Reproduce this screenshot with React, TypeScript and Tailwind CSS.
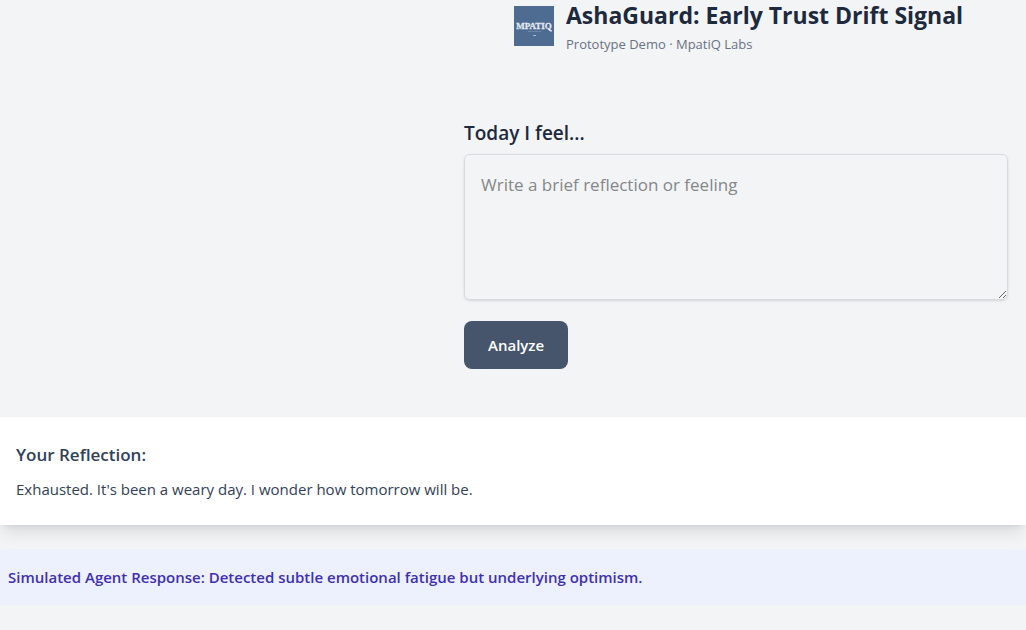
import { useState, type FormEvent } from "react";

function Logo() {
  return (
    <svg viewBox="0 0 40 40" className="h-10 w-10 shrink-0" role="img" aria-label="MpatiQ">
      <rect width="40" height="40" fill="#4e6b91" />
      <text
        x="20"
        y="23"
        textAnchor="middle"
        fontSize="9"
        fontWeight="700"
        fill="#e3e8ee"
        stroke="#e3e8ee"
        strokeWidth="0.3"
        fontFamily="'Liberation Serif', serif"
      >
        MPATIQ
      </text>
      <path d="M34 22.5l3.5 3" stroke="#e3e8ee" strokeWidth="1.2" />
      <path d="M14 25.5h13" stroke="#8c9fb8" strokeWidth="0.6" strokeDasharray="3 0.6" />
      <path d="M19 29.5h3" stroke="#a9b8ca" strokeWidth="1" />
    </svg>
  );
}

function Header() {
  return (
    <header className="flex items-center gap-3 pl-[50px]">
      <Logo />
      <div>
        <h1 className="text-[23px] leading-[30px] font-bold whitespace-nowrap text-slate-800">
          AshaGuard: Early Trust Drift Signal
        </h1>
        <p className="mt-1.5 text-[13px] leading-4 text-gray-500">Prototype Demo · MpatiQ Labs</p>
      </div>
    </header>
  );
}

function ReflectionForm({ onAnalyze }: { onAnalyze: (text: string) => void }) {
  const [text, setText] = useState("");

  const submit = (e: FormEvent) => {
    e.preventDefault();
    if (text.trim()) onAnalyze(text);
  };

  return (
    <form onSubmit={submit} className="mt-17 flex flex-col items-start">
      <label htmlFor="reflection" className="mb-2 text-[19px] leading-[26px] font-semibold text-slate-800">
        Today I feel...
      </label>
      <textarea
        id="reflection"
        value={text}
        onChange={(e) => setText(e.target.value)}
        placeholder="Write a brief reflection or feeling"
        className="h-[146px] w-full rounded-md border border-[#d8dadd] p-4 text-[17px] leading-7 text-slate-800 shadow-sm placeholder:text-[#858789]"
      />
      <button type="submit" className="mt-[21px] h-12 rounded-lg bg-[#46556b] px-6 text-[15px] font-semibold text-white">
        Analyze
      </button>
    </form>
  );
}

export default function App() {
  const [reflection, setReflection] = useState("Exhausted. It's been a weary day. I wonder how tomorrow will be.");

  return (
    <main className="min-h-screen overflow-x-hidden bg-[#f3f4f6] font-['Open_Sans','Noto_Sans',sans-serif]">
      <div className="mr-[18px] ml-auto w-[544px]">
        <Header />
        <ReflectionForm onAnalyze={setReflection} />
      </div>
      <section className="mt-12 bg-white px-4 py-6 shadow-lg">
        <h2 className="text-[17px] leading-7 font-semibold text-slate-700">Your Reflection:</h2>
        <p className="mt-2 text-[15px] leading-6 text-slate-700">{reflection}</p>
      </section>
      <section className="mt-6 bg-[#edf1fe] px-2 py-4">
        <p className="text-[15px] leading-6 font-semibold text-[#4030b0]">
          Simulated Agent Response: Detected subtle emotional fatigue but underlying optimism.
        </p>
      </section>
    </main>
  );
}
